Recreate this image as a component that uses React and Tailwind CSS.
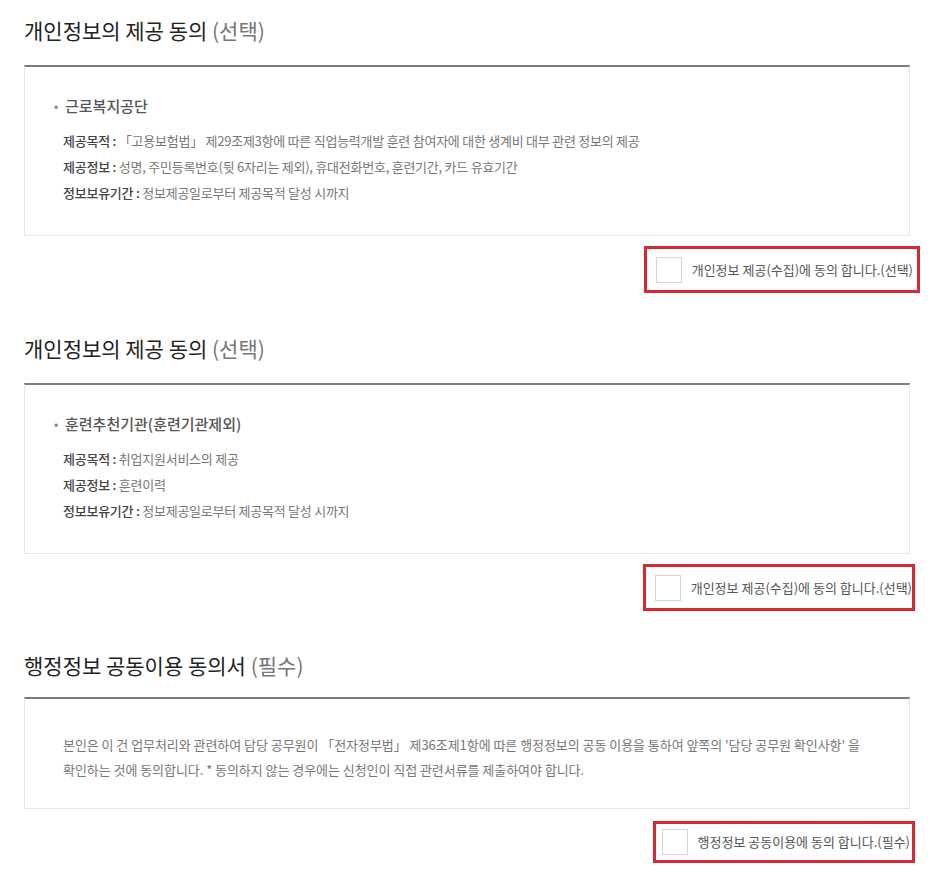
const FONT = { fontFamily: '"Noto Sans CJK KR", "Noto Sans", sans-serif' };

const Title = ({ main, sub }) => (
  <h2 className="pl-[24px] text-[21px] leading-[28px] text-[#222] font-normal">
    {main} <span className="text-[#777]">{sub}</span>
  </h2>
);

const InfoRow = ({ label, value }) => (
  <p className="leading-[26px] text-[13px] tracking-[-0.25px]">
    <span className="text-[#444] font-medium">{label} : </span>
    <span className="text-[#777]">{value}</span>
  </p>
);

const Agree = ({ text, className, boxClass }) => (
  <div className={`flex justify-end ${className}`}>
    <label className={`flex items-center border-[3px] border-[#d52a33] h-[47px] ${boxClass}`}>
      <span className="w-[26px] h-[26px] border border-[#d4d4d4] bg-white" />
      <span className="ml-[10px] text-[13px] text-[#555]">{text}</span>
    </label>
  </div>
);

const ProvideSection = ({ org, rows }) => (
  <section>
    <Title main="개인정보의 제공 동의" sub="(선택)" />
    <div className="ml-[24px] w-[886px] mt-[21px] border border-[#e6e6e9] border-t-2 border-t-[#7b7b86] pt-[27px] pb-[29px] pl-[38px]">
      <div className="flex items-center ml-[-9px] leading-[24px] text-[15px] text-[#555] font-medium">
        <span className="w-[6px] text-[#888] text-[12px]">•</span>
        <span className="ml-[5px]">{org}</span>
      </div>
      <div className="mt-[10px]">
        {rows.map((r) => (
          <InfoRow key={r[0]} label={r[0]} value={r[1]} />
        ))}
      </div>
    </div>
  </section>
);

export default function App() {
  return (
    <div className="w-[941px] min-h-[874px] bg-white pt-[16px]" style={FONT}>
      <ProvideSection
        org="근로복지공단"
        rows={[
          ["제공목적", "「고용보험법」 제29조제3항에 따른 직업능력개발 훈련 참여자에 대한 생계비 대부 관련 정보의 제공"],
          ["제공정보", "성명, 주민등록번호(뒷 6자리는 제외), 휴대전화번호, 훈련기간, 카드 유효기간"],
          ["정보보유기간", "정보제공일로부터 제공목적 달성 시까지"],
        ]}
      />
      <Agree text="개인정보 제공(수집)에 동의 합니다.(선택)" className="mt-[10px] pr-[21px]" boxClass="pl-[9px] pr-[4px]" />

      <div className="mt-[41px]">
        <ProvideSection
          org="훈련추천기관(훈련기관제외)"
          rows={[
            ["제공목적", "취업지원서비스의 제공"],
            ["제공정보", "훈련이력"],
            ["정보보유기간", "정보제공일로부터 제공목적 달성 시까지"],
          ]}
        />
      </div>
      <Agree text="개인정보 제공(수집)에 동의 합니다.(선택)" className="mt-[10px] pr-[26px]" boxClass="pl-[9px] pr-0" />

      <section className="mt-[40px]">
        <Title main="행정정보 공동이용 동의서" sub="(필수)" />
        <div className="ml-[24px] w-[886px] mt-[18px] border border-[#e6e6e9] border-t-2 border-t-[#7b7b86] pt-[33px] pb-[26px] pl-[38px] pr-[20px]">
          <p className="text-[13px] leading-[25px] text-[#777] tracking-[-0.05px]">
            본인은 이 건 업무처리와 관련하여 담당 공무원이 「전자정부법」 제36조제1항에 따른 행정정보의 공동 이용을 통하여 앞쪽의 '담당 공무원 확인사항' 을
            <br />
            확인하는 것에 동의합니다. * 동의하지 않는 경우에는 신청인이 직접 관련서류를 제출하여야 합니다.
          </p>
        </div>
        <div className="flex justify-end mt-[12px] pr-[26px]">
          <label className="flex items-center border-[3px] border-[#d52a33] pl-[6px] pr-[2px] h-[42px]">
            <span className="w-[26px] h-[26px] border border-[#d4d4d4] bg-white" />
            <span className="ml-[10px] text-[13px] text-[#555]">행정정보 공동이용에 동의 합니다.(필수)</span>
          </label>
        </div>
      </section>
    </div>
  );
}
